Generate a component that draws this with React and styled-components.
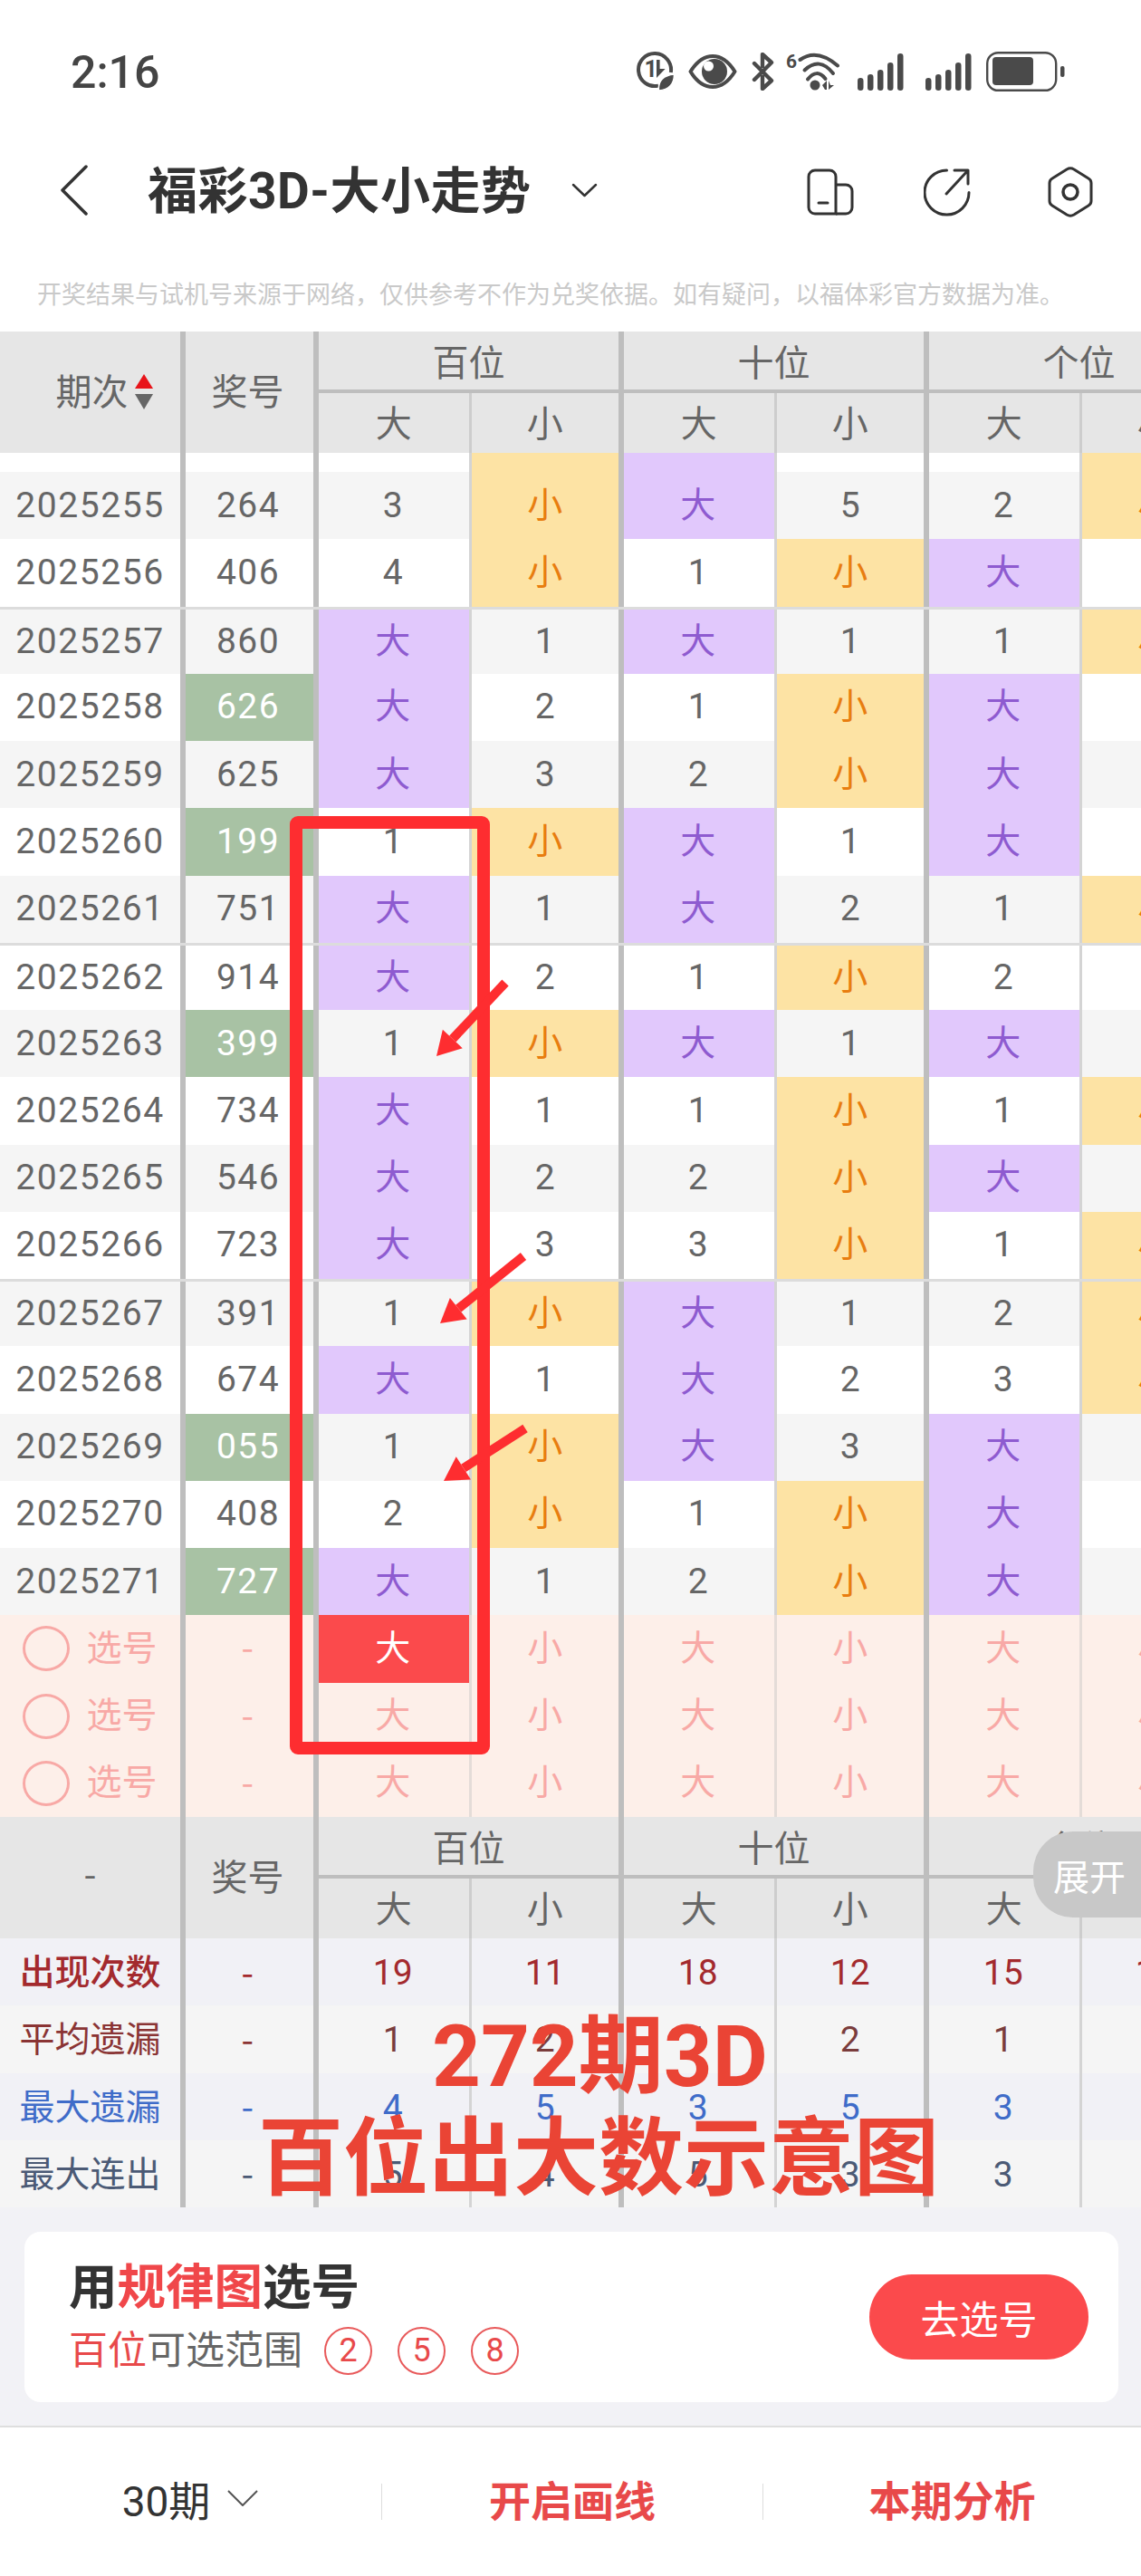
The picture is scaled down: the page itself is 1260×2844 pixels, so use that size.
import React from 'react';
import styled, { createGlobalStyle } from 'styled-components';

const GlobalStyle = createGlobalStyle`
  html, body {
    margin: 0;
    padding: 0;
    background: #fff;
  }
  * {
    box-sizing: border-box;
  }
`;

const COLUMNS = '205px 147px repeat(6, 168.5px)';
const LINE = '#bebebe';
const ICON = '#4a4a4a';

const Page = styled.div`
  position: relative;
  width: 1260px;
  height: 2844px;
  overflow: hidden;
  background: #fff;
  color: #666;
  font-family: Roboto, "Noto Sans CJK SC", sans-serif;
`;

const StatusBar = styled.div`
  height: 160px;
  display: flex;
  align-items: center;
  justify-content: space-between;
  padding: 0 84px 2px 78px;
`;

const Clock = styled.div`
  font-size: 50px;
  font-weight: 500;
  color: #444;
  line-height: 1;
  padding-top: 2px;
`;

const StatusIcons = styled.div`
  display: flex;
  align-items: center;
  height: 46px;
`;

const Glyph = styled.svg`
  display: block;
  flex: none;
  margin-left: ${(p) => p.$gap || 0}px;
  fill: ${ICON};
`;

const NavBar = styled.div`
  height: 100px;
  display: flex;
  align-items: center;
  padding: 0 53px 0 66px;
  svg {
    display: block;
    flex: none;
  }
`;

const Title = styled.div`
  margin-left: 66px;
  padding-top: 3px;
  font-size: 55px;
  font-weight: 700;
  color: #333;
  line-height: 1;
  letter-spacing: 0.5px;
`;

const TitleCaret = styled.div`
  margin-left: 45px;
  margin-right: auto;
`;

const NavActions = styled.div`
  display: flex;
  align-items: center;
  gap: 77px;
  padding-top: 4px;
`;

const HexIcon = styled.svg`
  margin-left: 6px;
`;

const Notice = styled.div`
  height: 106px;
  padding: 40px 0 0 41px;
  font-size: 27px;
  line-height: 52px;
  color: #c9c9c9;
  white-space: nowrap;
`;

const Head = styled.div`
  display: grid;
  grid-template-columns: ${COLUMNS};
  grid-template-rows: 68px 66px;
  background: #e6e6e6;
  font-size: 40px;
  color: #666;
`;

const HeadSide = styled.div`
  grid-row: 1 / span 2;
  display: flex;
  align-items: center;
  justify-content: center;
  padding: 0 ${(p) => (p.$inner ? 4 : 0)}px 6px ${(p) => p.$pad || 0}px;
  border-right: 6px solid ${LINE};
`;

const HeadGroup = styled.div`
  grid-column: span 2;
  display: flex;
  align-items: center;
  justify-content: center;
  border-right: 6px solid ${LINE};
  border-bottom: 4px solid ${LINE};
`;

const HeadCell = styled.div`
  display: flex;
  align-items: center;
  justify-content: center;
  padding-bottom: 4px;
  border-right: ${(p) => (p.$thick ? `6px solid ${LINE}` : '3px solid #cdcdcd')};
`;

const SortMark = styled.span`
  display: inline-flex;
  flex-direction: column;
  gap: 6px;
  margin: 4px 0 0 7px;
  &::before,
  &::after {
    content: '';
    width: 0;
    height: 0;
    border-left: 10px solid transparent;
    border-right: 10px solid transparent;
  }
  &::before {
    border-bottom: 16px solid #e8141a;
  }
  &::after {
    border-top: 17px solid #666;
  }
`;

const Dash = styled.span`
  display: block;
  padding-bottom: 7px;
  line-height: 1;
  font-family: "Noto Sans CJK SC", sans-serif;
`;

const Row = styled.div`
  display: grid;
  grid-template-columns: ${COLUMNS};
  height: ${(p) => p.$height || 74.25}px;
  background: ${(p) => p.$bg || '#fff'};
  border-top: ${(p) => (p.$rule ? '3px solid #dcdcdc' : 'none')};
  font-size: 39px;
  line-height: 1;
  > div {
    padding-top: ${(p) => (p.$stat ? 3 : 0)}px;
  }
`;

const Period = styled.div`
  display: flex;
  align-items: center;
  justify-content: center;
  gap: 18px;
  border-right: 6px solid ${LINE};
  color: ${(p) => p.$color || '#666'};
  letter-spacing: ${(p) => (p.$digits ? '1.6px' : '0')};
  font-weight: ${(p) => p.$weight || 400};
`;

const Draw = styled.div`
  display: flex;
  align-items: center;
  justify-content: center;
  padding-right: 3px;
  border-right: 6px solid ${LINE};
  letter-spacing: 1.4px;
  background: ${(p) => (p.$hot ? '#a8c2a4' : 'transparent')};
  color: ${(p) => (p.$hot ? '#fff' : p.$color || '#666')};
`;

const CELL_BG = { big: '#e1c8fc', small: '#fde3a4', pick: '#fb4a4c' };
const CELL_FG = { big: '#8e5bd0', small: '#e87d10', pick: '#fff', soft: '#f8a9a6' };

const Cell = styled.div`
  display: flex;
  align-items: center;
  justify-content: center;
  overflow: hidden;
  padding-right: ${(p) => (p.$thick ? 0 : 2)}px;
  background: ${(p) => CELL_BG[p.$kind] || 'transparent'};
  color: ${(p) => p.$color || CELL_FG[p.$kind] || '#666'};
  border-right: ${(p) => (p.$thick ? `6px solid ${LINE}` : `3px solid ${p.$soft ? '#e4dcd8' : '#d4d4d4'}`)};
`;

const Ring = styled.span`
  width: 52px;
  height: 50px;
  border: 3px solid #f8a9a6;
  border-radius: 50%;
  flex: none;
`;

const Fold = styled.div`
  position: absolute;
  right: 0;
  top: 2022px;
  width: 119px;
  height: 95px;
  display: flex;
  align-items: center;
  justify-content: center;
  padding-left: 5px;
  background: #c8c8c8;
  border-radius: 44px 0 0 44px;
  color: #fff;
  font-size: 40px;
`;

const Lower = styled.div`
  height: 241px;
  padding: 27px 25px 0 27px;
  background: #f2f2f6;
`;

const Card = styled.div`
  height: 188px;
  display: flex;
  align-items: center;
  justify-content: space-between;
  padding: 0 33px 0 49px;
  background: #fff;
  border-radius: 18px;
`;

const CardText = styled.div`
  padding-top: 3px;
`;

const CardTitle = styled.div`
  font-size: 53.5px;
  line-height: 60px;
  font-weight: 700;
  color: #333;
  b {
    font-weight: 700;
    color: #f0474a;
  }
`;

const CardLine = styled.div`
  display: flex;
  align-items: center;
  margin-top: 11px;
  font-size: 43px;
  line-height: 56px;
  color: #666;
  b {
    font-weight: 400;
    color: #e8494a;
  }
`;

const Choices = styled.div`
  display: flex;
  gap: 28px;
  margin-left: 24px;
`;

const Choice = styled.span`
  width: 53px;
  height: 53px;
  display: flex;
  align-items: center;
  justify-content: center;
  border: 2px solid #e8595a;
  border-radius: 50%;
  color: #e8494a;
  font-size: 36px;
`;

const GoButton = styled.div`
  width: 242px;
  height: 94px;
  display: flex;
  align-items: center;
  justify-content: center;
  background: #fb4a4c;
  border-radius: 47px;
  color: #fff;
  font-size: 43px;
`;

const Footer = styled.div`
  height: 166px;
  display: grid;
  grid-template-columns: 421px 421px 418px;
  align-items: center;
  border-top: 2px solid #dedede;
  font-size: 46px;
`;

const FooterItem = styled.div`
  height: 40px;
  display: flex;
  align-items: center;
  justify-content: center;
  gap: 18px;
  padding-bottom: 8px;
  border-left: ${(p) => (p.$first ? 'none' : '1px solid #ddd')};
  color: ${(p) => (p.$first ? '#333' : '#e8494a')};
  font-weight: ${(p) => (p.$first ? 400 : 700)};
`;

const Overlay = styled.svg`
  position: absolute;
  left: 0;
  top: 0;
  pointer-events: none;
`;

const Caption = styled.div`
  position: absolute;
  left: 0;
  width: 100%;
  top: ${(p) => p.$top}px;
  padding-left: ${(p) => p.$left}px;
  font-size: ${(p) => p.$size}px;
  font-weight: 700;
  line-height: 1;
  color: #ea4435;
  white-space: nowrap;
`;

const S = '小';
const B = '大';

const ROWS = [
  ['2025255', '264', 0, ['3', S, B, '5', '2', S]],
  ['2025256', '406', 0, ['4', S, '1', S, B, '1']],
  ['2025257', '860', 0, [B, '1', B, '1', '1', S]],
  ['2025258', '626', 1, [B, '2', '1', S, B, '1']],
  ['2025259', '625', 0, [B, '3', '2', S, B, '2']],
  ['2025260', '199', 1, ['1', S, B, '1', B, '3']],
  ['2025261', '751', 0, [B, '1', B, '2', '1', S]],
  ['2025262', '914', 0, [B, '2', '1', S, '2', '1']],
  ['2025263', '399', 1, ['1', S, B, '1', B, '2']],
  ['2025264', '734', 0, [B, '1', '1', S, '1', S]],
  ['2025265', '546', 0, [B, '2', '2', S, B, '1']],
  ['2025266', '723', 0, [B, '3', '3', S, '1', S]],
  ['2025267', '391', 0, ['1', S, B, '1', '2', S]],
  ['2025268', '674', 0, [B, '1', B, '2', '3', S]],
  ['2025269', '055', 1, ['1', S, B, '3', B, '1']],
  ['2025270', '408', 0, ['2', S, '1', S, B, '2']],
  ['2025271', '727', 1, [B, '1', '2', S, B, '3']],
];

const STATS = [
  ['出现次数', '#a32a2e', '#a32a2e', '#f1f1f6', ['19', '11', '18', '12', '15', '15'], 500],
  ['平均遗漏', '#8a3434', '#7a3c3c', '#f5f5f5', ['1', '2', '1', '2', '1', '2'], 400],
  ['最大遗漏', '#3f6cc9', '#3f6cc9', '#f1f1f6', ['4', '5', '3', '5', '3', '5'], 400],
  ['最大连出', '#4b5a75', '#4b5a75', '#f5f5f5', ['5', '4', '5', '3', '3', '4'], 400],
];

const kindOf = (v) => (v === B ? 'big' : v === S ? 'small' : undefined);

// one hand-drawn annotation arrow, tail to tip
const Arrow = ({ x1, y1, x2, y2 }) => {
  const len = Math.hypot(x2 - x1, y2 - y1);
  const ux = (x2 - x1) / len;
  const uy = (y2 - y1) / len;
  const bx = x2 - ux * 26;
  const by = y2 - uy * 26;
  const head = `${x2},${y2} ${bx - uy * 15},${by + ux * 15} ${bx + uy * 15},${by - ux * 15}`;
  return (
    <g fill="#fe2d30">
      <line x1={x1} y1={y1} x2={bx} y2={by} stroke="#fe2d30" strokeWidth="10" />
      <polygon points={head} />
    </g>
  );
};

const TableHead = ({ side, pad }) => (
  <Head>
    <HeadSide $pad={pad}>{side}</HeadSide>
    <HeadSide $inner>奖号</HeadSide>
    <HeadGroup>百位</HeadGroup>
    <HeadGroup>十位</HeadGroup>
    <HeadGroup>个位</HeadGroup>
    {[B, S, B, S, B, S].map((t, i) => (
      <HeadCell key={i} $thick={i % 2 === 1}>{t}</HeadCell>
    ))}
  </Head>
);

const SignalBars = ({ gap }) => (
  <Glyph $gap={gap} width="51" height="41" viewBox="0 0 51 41">
    <rect x="0" y="27" width="6.5" height="14" rx="3.2" />
    <rect x="11" y="23" width="6.5" height="18" rx="3.2" />
    <rect x="22" y="18" width="6.5" height="23" rx="3.2" />
    <rect x="33" y="10" width="6.5" height="31" rx="3.2" />
    <rect x="44" y="0" width="6.5" height="41" rx="3.2" />
  </Glyph>
);

const StatusGlyphs = () => (
  <StatusIcons>
    <Glyph width="42" height="44" viewBox="0 0 42 44">
      <path d="M24 37.6A18 18 0 1 1 37.8 23" fill="none" stroke={ICON} strokeWidth="4" />
      <text x="8.5" y="27.5" fontSize="25" fontWeight="700" fontFamily="Roboto">1</text>
      <path d="M22 9h3.6v10h6L22 29z" />
      <path d="M24.5 43C23.5 32 30 26 41.5 25 41.5 36 36 42 24.5 43z" stroke="#fff" strokeWidth="1.5" />
    </Glyph>
    <Glyph $gap={15} width="54" height="38" viewBox="0 0 54 38">
      <path d="M2.5 19C10 7 18 2 27 2s17 5 24.5 17C44 31 36 36 27 36S10 31 2.5 19z" fill="none" stroke={ICON} strokeWidth="4" strokeLinejoin="round" />
      <circle cx="29" cy="19" r="14" />
      <circle cx="22.5" cy="13" r="5.5" fill="#fff" />
    </Glyph>
    <Glyph $gap={16} width="25" height="42" viewBox="0 0 25 42">
      <path d="M3 12l19 19-10 9V27M3 30l19-19-10-9v13" fill="none" stroke={ICON} strokeWidth="4.4" strokeLinejoin="round" strokeLinecap="round" />
    </Glyph>
    <Glyph $gap={13} width="59" height="42" viewBox="0 0 59 42">
      <text x="0" y="16.5" fontSize="21" fontWeight="700" fontFamily="Roboto">6</text>
      <path d="M15.5 8Q34-5 57 14.5" fill="none" stroke={ICON} strokeWidth="4" strokeLinecap="round" />
      <path d="M20.5 19.5Q37 4 52 23" fill="none" stroke={ICON} strokeWidth="4" strokeLinecap="round" />
      <path d="M24 29.5Q34 17 43.5 29" fill="none" stroke={ICON} strokeWidth="4" strokeLinecap="round" />
      <circle cx="32" cy="36" r="5.5" />
      <path d="M40 36l5-5v10h-2zM47 31v10l6-5h-4z" />
    </Glyph>
    <SignalBars gap={20} />
    <SignalBars gap={24} />
    <Glyph $gap={16} width="87" height="44" viewBox="0 0 87 44">
      <rect x="1.2" y="1.2" width="76" height="41.6" rx="12" fill="none" stroke={ICON} strokeWidth="2.4" />
      <rect x="7" y="6" width="45" height="31" rx="4" />
      <rect x="82" y="16" width="4.5" height="12" rx="2" />
    </Glyph>
  </StatusIcons>
);

export default function App() {
  return (
    <Page lang="zh-CN">
      <GlobalStyle />

      <StatusBar>
        <Clock>2:16</Clock>
        <StatusGlyphs />
      </StatusBar>

      <NavBar>
        <svg width="31" height="56" viewBox="0 0 31 56" fill="none" stroke="#333" strokeWidth="3.5" strokeLinecap="round" strokeLinejoin="round">
          <path d="M29 2L3 28l26 26" />
        </svg>
        <Title>福彩3D-大小走势</Title>
        <TitleCaret>
          <svg width="29" height="16" viewBox="0 0 29 16" fill="none" stroke="#333" strokeWidth="2.5" strokeLinecap="round" strokeLinejoin="round">
            <path d="M2 2l12.5 12L27 2" />
          </svg>
        </TitleCaret>
        <NavActions>
          <svg width="52" height="52" viewBox="0 0 52 52" fill="none" stroke="#333" strokeWidth="3">
            <path d="M32 50H9a7 7 0 0 1-7-7V9a7 7 0 0 1 7-7h16a7 7 0 0 1 7 7v41z" />
            <path d="M32 18h11a7 7 0 0 1 7 7v18a7 7 0 0 1-7 7H32" />
            <path d="M13 38h10" strokeLinecap="round" />
          </svg>
          <svg width="54" height="54" viewBox="0 0 54 54" fill="none" stroke="#333" strokeWidth="3" strokeLinecap="round" strokeLinejoin="round">
            <path d="M25.5 3A24.5 24.5 0 1 0 50 27.5" />
            <path d="M25 29L49 3M34 3h15v15" />
          </svg>
          <HexIcon width="50" height="56" viewBox="0 0 50 56" fill="none" stroke="#333" strokeWidth="3" strokeLinejoin="round">
            <path d="M21 3a8 8 0 0 1 8 0l16 10a6 6 0 0 1 3 5v20a6 6 0 0 1-3 5L29 53a8 8 0 0 1-8 0L5 43a6 6 0 0 1-3-5V18a6 6 0 0 1 3-5z" />
            <circle cx="25" cy="28" r="8" strokeWidth="3.5" />
          </HexIcon>
        </NavActions>
      </NavBar>

      <Notice>开奖结果与试机号来源于网络，仅供参考不作为兑奖依据。如有疑问，以福体彩官方数据为准。</Notice>

      <TableHead pad={31} side={<>期次<SortMark /></>} />

      <Row $height={21}>
        <Period />
        <Draw />
        {['', S, B, '', '', S].map((v, i) => (
          <Cell key={i} $kind={kindOf(v)} $thick={i % 2 === 1} />
        ))}
      </Row>

      {ROWS.map(([period, draw, hot, cells], r) => (
        <Row key={period} $bg={r % 2 === 0 ? '#f5f5f5' : '#fff'} $rule={r === 2 || r === 7 || r === 12}>
          <Period $digits>{period}</Period>
          <Draw $hot={!!hot}>{draw}</Draw>
          {cells.map((v, i) => (
            <Cell key={i} $kind={kindOf(v)} $thick={i % 2 === 1}>{v}</Cell>
          ))}
        </Row>
      ))}

      {[0, 1, 2].map((r) => (
        <Row key={r} $bg="#fdefe9">
          <Period $color="#f8a9a6"><Ring />选号</Period>
          <Draw $color="#f8a9a6"><Dash>-</Dash></Draw>
          {[B, S, B, S, B, S].map((v, i) => (
            <Cell key={i} $soft $kind={r === 0 && i === 0 ? 'pick' : 'soft'} $thick={i % 2 === 1}>{v}</Cell>
          ))}
        </Row>
      ))}

      <TableHead side={<Dash>-</Dash>} />

      {STATS.map(([label, color, numColor, bg, values, weight]) => (
        <Row key={label} $bg={bg} $stat>
          <Period $color={color} $weight={weight}>{label}</Period>
          <Draw $color={color}><Dash>-</Dash></Draw>
          {values.map((v, i) => (
            <Cell key={i} $color={numColor} $thick={i % 2 === 1}>{v}</Cell>
          ))}
        </Row>
      ))}

      <Lower>
        <Card>
          <CardText>
            <CardTitle>用<b>规律图</b>选号</CardTitle>
            <CardLine>
              <span><b>百位</b>可选范围</span>
              <Choices>
                <Choice>2</Choice>
                <Choice>5</Choice>
                <Choice>8</Choice>
              </Choices>
            </CardLine>
          </CardText>
          <GoButton>去选号</GoButton>
        </Card>
      </Lower>

      <Footer>
        <FooterItem $first>
          30期
          <svg width="36" height="20" viewBox="0 0 36 20" fill="none" stroke="#555" strokeWidth="2" strokeLinejoin="round">
            <path d="M2 2l16 16L34 2" />
          </svg>
        </FooterItem>
        <FooterItem>开启画线</FooterItem>
        <FooterItem>本期分析</FooterItem>
      </Footer>

      <Fold>展开</Fold>

      <Overlay width="1260" height="2844" viewBox="0 0 1260 2844">
        <rect x="327" y="908" width="207" height="1022" rx="2" fill="none" stroke="#fe2d30" strokeWidth="14" />
        <Arrow x1={558} y1={1085} x2={482} y2={1166} />
        <Arrow x1={578} y1={1387} x2={486} y2={1461} />
        <Arrow x1={580} y1={1577} x2={490} y2={1635} />
      </Overlay>

      <Caption $top={2224} $left={477} $size={94}>272期3D</Caption>
      <Caption $top={2337} $left={285} $size={94}>百位出大数示意图</Caption>
    </Page>
  );
}
